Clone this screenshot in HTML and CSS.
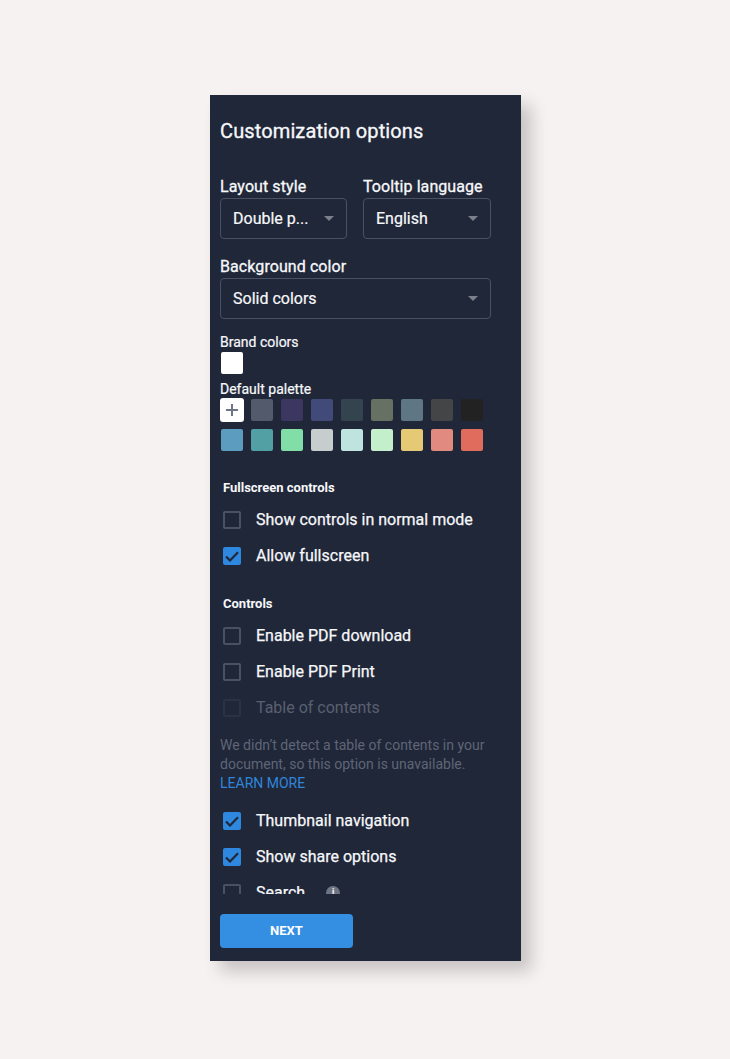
FILE: index.html
```html
<!DOCTYPE html>
<html lang="en">
<head>
<meta charset="utf-8">
<title>Customization options</title>
<link rel="stylesheet" href="styles.css">
</head>
<body>
<main class="panel">
  <div class="scroll">
    <h1 class="title">Customization options</h1>
    <div class="field-row">
      <div class="field field-a">
        <label class="label">Layout style</label>
        <div class="select"><span>Double p...</span><i class="caret"></i></div>
      </div>
      <div class="field field-b">
        <label class="label">Tooltip language</label>
        <div class="select"><span>English</span><i class="caret"></i></div>
      </div>
    </div>
    <div class="field field-full">
      <label class="label">Background color</label>
      <div class="select"><span>Solid colors</span><i class="caret"></i></div>
    </div>
    <div class="small-label brand-label">Brand colors</div>
    <div class="swatches brand"><span class="swatch c-white"></span></div>
    <div class="small-label palette-label">Default palette</div>
    <div class="swatches">
      <span class="add"><svg width="14" height="14" viewBox="0 0 14 14"><path d="M7 1v12M1 7h12" stroke="#6f7482" stroke-width="2" fill="none"/></svg></span>
      <span class="swatch c1"></span><span class="swatch c2"></span><span class="swatch c3"></span><span class="swatch c4"></span><span class="swatch c5"></span><span class="swatch c6"></span><span class="swatch c7"></span><span class="swatch c8"></span>
      <span class="swatch c9"></span><span class="swatch c10"></span><span class="swatch c11"></span><span class="swatch c12"></span><span class="swatch c13"></span><span class="swatch c14"></span><span class="swatch c15"></span><span class="swatch c16"></span><span class="swatch c17"></span>
    </div>
    <h2 class="section s-full">Fullscreen controls</h2>
    <div class="check"><span class="box"></span>Show controls in normal mode</div>
    <div class="check"><span class="box on"><svg width="14" height="11" viewBox="0 0 14 11"><path d="M1 5.5 5 9.5 13 1.2" stroke="#202739" stroke-width="2.2" fill="none"/></svg></span>Allow fullscreen</div>
    <h2 class="section s-ctrl">Controls</h2>
    <div class="check"><span class="box"></span>Enable PDF download</div>
    <div class="check"><span class="box"></span>Enable PDF Print</div>
    <div class="check disabled"><span class="box"></span>Table of contents</div>
    <p class="help">We didn’t detect a table of contents in your document, so this option is unavailable. <a class="learn" href="#">LEARN MORE</a></p>
    <div class="check"><span class="box on"><svg width="14" height="11" viewBox="0 0 14 11"><path d="M1 5.5 5 9.5 13 1.2" stroke="#202739" stroke-width="2.2" fill="none"/></svg></span>Thumbnail navigation</div>
    <div class="check"><span class="box on"><svg width="14" height="11" viewBox="0 0 14 11"><path d="M1 5.5 5 9.5 13 1.2" stroke="#202739" stroke-width="2.2" fill="none"/></svg></span>Show share options</div>
    <div class="check"><span class="box"></span>Search<span class="info">i</span></div>
  </div>
  <button class="next">NEXT</button>
</main>
</body>
</html>
```
FILE: styles.css
```css
* { box-sizing: border-box; }
html, body { margin: 0; height: 100%; }
body {
  background: #f6f2f1;
  padding: 95px 0 0 210px;
  font-family: Roboto, "Liberation Sans", sans-serif;
  color: #f7f8fa;
  overflow: hidden;
}
.panel {
  width: 311px;
  height: 866px;
  background: #202739;
  box-shadow: 10px 10px 16px rgba(0, 0, 0, 0.2);
  padding: 0 10px;
}
.scroll { height: 799px; overflow: hidden; }
.title {
  margin: 0;
  padding-top: 24px;
  font-size: 20px;
  line-height: 24px;
  font-weight: 400;
  letter-spacing: 0.12px;
  -webkit-text-stroke: 0.3px #f7f8fa;
}
.field-row { display: flex; gap: 16px; margin-top: 34px; }
.field-a { width: 127px; }
.field-b { width: 128px; }
.field-full { width: 271px; margin-top: 18px; }
.label {
  display: block;
  font-size: 16px;
  line-height: 19px;
  height: 21px;
  letter-spacing: 0.08px;
  -webkit-text-stroke: 0.3px #f7f8fa;
}
.select {
  height: 41px;
  border: 1px solid #4a5162;
  border-radius: 4px;
  padding: 0 12px;
  display: flex;
  align-items: center;
  justify-content: space-between;
  font-size: 16px;
  -webkit-text-stroke: 0.2px #f7f8fa;
}
.caret {
  width: 0;
  height: 0;
  border-left: 5px solid transparent;
  border-right: 5px solid transparent;
  border-top: 5px solid #7c808d;
}
.small-label { font-size: 14px; line-height: 16px; -webkit-text-stroke: 0.2px #f7f8fa; }
.brand-label { margin-top: 15px; }
.palette-label { margin-top: 7px; }
.swatches {
  display: grid;
  grid-template-columns: repeat(9, 22px);
  gap: 8px;
  padding-left: 1px;
  margin-top: 2px;
}
.brand { margin-top: 2px; }
.swatch { width: 22px; height: 22px; border-radius: 2px; display: block; }
.add {
  width: 24px;
  height: 24px;
  margin: -1px;
  background: #fff;
  border-radius: 3px;
  display: flex;
  align-items: center;
  justify-content: center;
}
.c-white { background: #fff; }
.c1 { background: #525a6b; }
.c2 { background: #3b3760; }
.c3 { background: #414a78; }
.c4 { background: #34444e; }
.c5 { background: #667063; }
.c6 { background: #5f7685; }
.c7 { background: #434546; }
.c8 { background: #222222; }
.c9 { background: #5c9cbf; }
.c10 { background: #52a0a3; }
.c11 { background: #80dea6; }
.c12 { background: #c7cccd; }
.c13 { background: #bfe4df; }
.c14 { background: #c3efca; }
.c15 { background: #e5c975; }
.c16 { background: #e18a80; }
.c17 { background: #e06c5e; }
.section {
  margin: 0 0 0 3px;
  font-size: 13px;
  line-height: 16px;
  font-weight: 700;
  height: 16px;
}
.s-full { margin-top: 29px; margin-bottom: 6px; }
.s-ctrl { margin-top: 22px; margin-bottom: 6px; }
.check {
  display: flex;
  align-items: center;
  height: 36px;
  padding: 0 0 2px 3px;
  font-size: 16px;
  -webkit-text-stroke: 0.25px #f7f8fa;
}
.box {
  width: 18px;
  height: 18px;
  margin: 2px 15px 0 0;
  border: 2px solid #4a5162;
  border-radius: 2px;
  display: flex;
  align-items: center;
  justify-content: center;
  flex: none;
}
.box.on { background: #2f88e0; border-color: #2f88e0; }
.check.disabled { color: #5a6070; -webkit-text-stroke: 0; }
.disabled .box { border-color: #2b3244; }
.help {
  margin: 10px 0 10px;
  font-size: 14px;
  line-height: 19px;
  color: #5f6576;
}
.learn { color: #2f86d9; text-decoration: none; display: block; }
.info {
  width: 14px;
  height: 14px;
  margin: 2px 0 0 21px;
  border-radius: 50%;
  background: #6f7482;
  color: #e8e9ec;
  font-size: 11px;
  font-weight: 700;
  line-height: 14px;
  text-align: center;
  -webkit-text-stroke: 0;
}
.next {
  display: block;
  margin-top: 20px;
  padding: 0 0 2px;
  width: 133px;
  height: 34px;
  border: 0;
  border-radius: 4px;
  background: #348fe2;
  color: #fff;
  font-family: inherit;
  font-size: 13px;
  font-weight: 700;
}
```
